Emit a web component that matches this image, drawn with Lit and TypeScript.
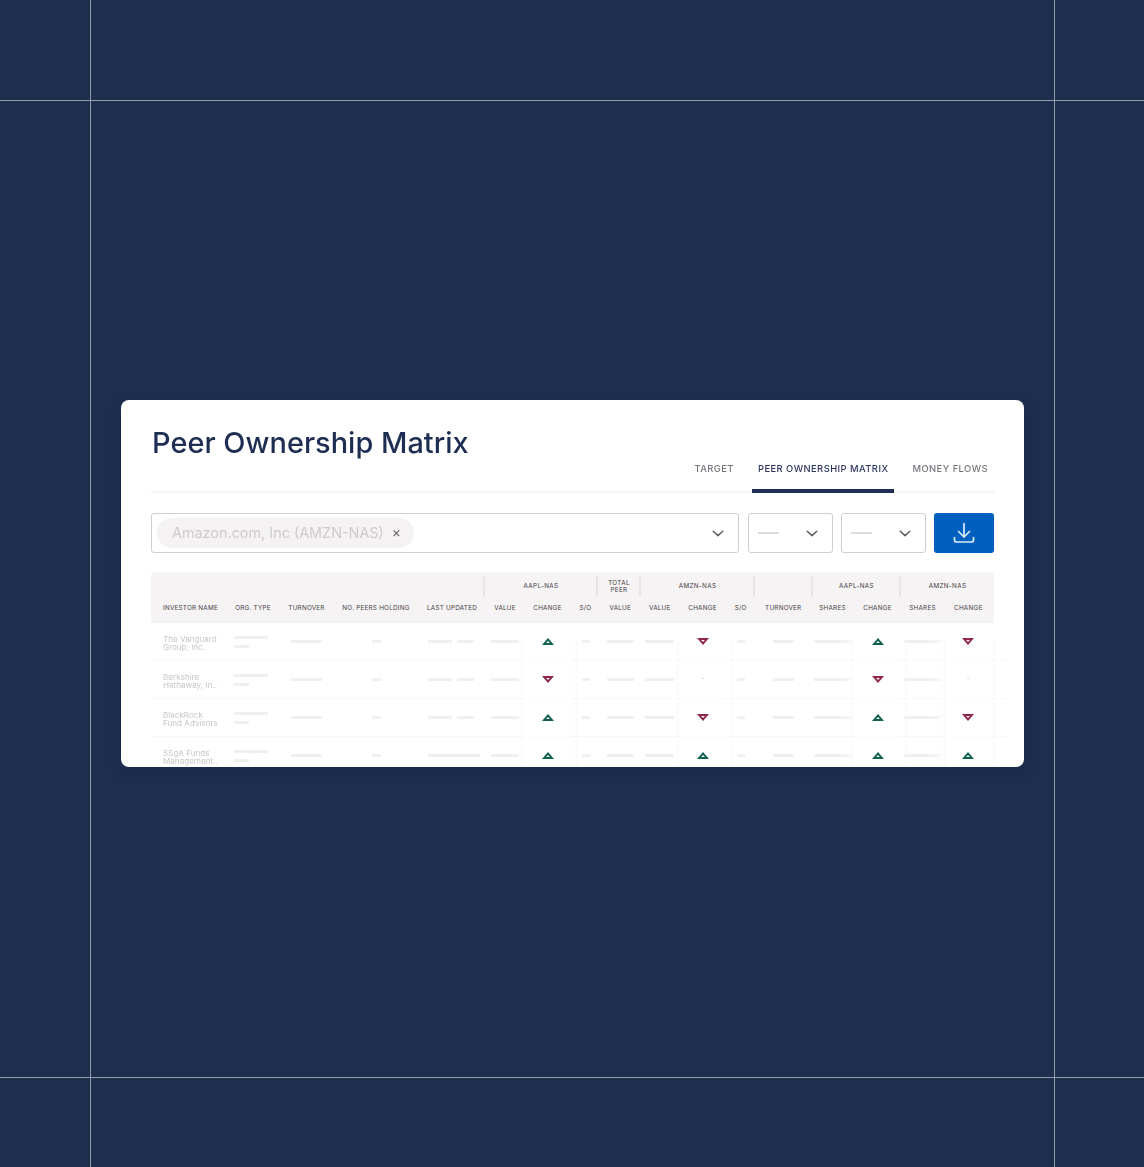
import { LitElement, html, css, svg } from "lit";
import { customElement } from "lit/decorators.js";

type Chg = "u" | "d" | "-";
const rows: { n: [string, string]; c: [Chg, Chg, Chg, Chg]; long?: boolean }[] = [
  { n: ["The Vanguard", "Group, Inc."], c: ["u", "d", "u", "d"] },
  { n: ["Berkshire", "Hathaway, In.."], c: ["d", "-", "d", "-"] },
  { n: ["BlackRock", "Fund Advisors"], c: ["u", "d", "u", "d"] },
  { n: ["SSgA Funds", "Management.."], c: ["u", "u", "u", "u"], long: true },
];
const heads = ["INVESTOR NAME", "ORG. TYPE", "TURNOVER", "NO. PEERS HOLDING", "LAST UPDATED", "VALUE", "CHANGE", "S/O", "VALUE", "VALUE", "CHANGE", "S/O", "TURNOVER", "SHARES", "CHANGE", "SHARES", "CHANGE"];
const groups = [
  ["", false], ["AAPL-NAS", true], ["TOTAL PEER", true], ["AMZN-NAS", true], ["", true], ["AAPL-NAS", true], ["AMZN-NAS", true],
] as [string, boolean][];
const streaks = [369, 424, 525, 579, 700, 754, 792, 842];

const chevron = svg`<svg class="chev" width="12" height="7" viewBox="0 0 12 7" fill="none"><path d="M1.2 1.2 6 5.6l4.8-4.4" stroke="#5f5d63" stroke-width="1.5" stroke-linecap="round" stroke-linejoin="round"/></svg>`;
const up = svg`<svg width="12" height="7" viewBox="0 0 12 7"><path d="M6 0 12 7H0Z" fill="#0f6150"/><path d="M6 3 7.9 5.1H4.1Z" fill="#fff"/></svg>`;
const down = svg`<svg width="12" height="7" viewBox="0 0 12 7"><path d="M6 7 12 0H0Z" fill="#8e2747"/><path d="M6 4 7.9 1.9H4.1Z" fill="#fff"/></svg>`;

@customElement("app-root")
export class AppRoot extends LitElement {
  static styles = css`
    :host { display: block; position: relative; width: 1144px; height: 1167px; background: #1e2e4e; overflow: hidden; font-family: Inter, "Liberation Sans", sans-serif; }
    .v, .h { position: absolute; background: #8e9ca8; }
    .v { top: 0; bottom: 0; width: 1px; }
    .h { left: 0; right: 0; height: 1px; }
    .x1 { left: 90px; } .x2 { left: 1054px; } .y1 { top: 100px; } .y2 { top: 1077px; }
    .stage { padding: 400px 120px 0 121px; }
    .card { height: 367px; box-sizing: border-box; background: #fff; border-radius: 8px; padding: 0 30px; overflow: hidden; box-shadow: 0 4px 12px rgba(10, 20, 40, .15); }
    .top, .filters, .table { filter: blur(.4px); }
    .top { height: 93px; box-sizing: border-box; position: relative; display: flex; justify-content: space-between; border-bottom: 2px solid #f6f4f4; }
    h1 { margin: 23px 0 0 1px; font-size: 28.9px; line-height: 40px; font-weight: 500; color: #1e2d52; letter-spacing: .03px; }
    .tabs { display: flex; align-items: flex-end; height: 93px; }
    .tab { font-size: 9.4px; letter-spacing: .45px; color: #77757b; font-weight: 500; height: 32px; padding: 0 6px; display: flex; align-items: flex-start; white-space: nowrap; box-sizing: border-box; margin-bottom: -1px; line-height: 14px; }
    .tab.on { color: #2b3560; border-bottom: 4px solid #1e2d52; margin: 0 12px; padding-top: 1px; }
    .filters { display: flex; gap: 9px; margin-top: 20px; }
    .box { height: 40px; box-sizing: border-box; border: 1px solid #cfcfcf; border-radius: 3px; display: flex; align-items: center; background: #fff; }
    .search { width: 588px; padding: 0 14px 0 5px; justify-content: space-between; }
    .chip { height: 30px; width: 257px; box-sizing: border-box; border-radius: 15px; background: #f5f2f3; display: flex; align-items: center; padding: 0 13px 0 15px; justify-content: space-between; color: #cdcbcc; font-size: 14.4px; white-space: nowrap; }
    .chip span { margin-top: -2px; }
    .chip b { color: #66646a; font-weight: 400; font-size: 14px; margin-top: -3px; }
    .sel { width: 85px; padding: 0 14px 0 9px; justify-content: space-between; }
    .sel + .sel { margin-left: -1px; }
    .dash { width: 21px; height: 2px; background: #dcdcdc; }
    .btn { width: 60px; height: 40px; margin-left: -1px; background: #0060bf; border-radius: 3px; display: flex; align-items: center; justify-content: center; }
    .table { margin-top: 19px; }
    .thead { background: #f6f3f4; height: 51px; border-radius: 4px 4px 0 0; }
    .groups { display: grid; grid-template-columns: 333px 113px 43px 114px 58px 88px 94px; height: 26px; padding-top: 4px; box-sizing: border-box; }
    .g { display: flex; align-items: center; justify-content: center; text-align: center; font-size: 6.3px; line-height: 6.5px; letter-spacing: .35px; font-weight: 400; color: #3e3c42; height: 21px; }
    .g.div { border-left: 2px solid #e7e4e5; margin-left: -1px; }
    .g span { display: block; }
    .g span.narrow { width: 30px; }
    .heads, .row { display: grid; grid-template-columns: 75.5px 53px 54px 85px 67px 39px 46px 30px 39.5px 39.5px 46px 30.5px 54.5px 44px 46px 44px 49.5px; }
    .heads { height: 25px; align-items: center; }
    .hd { font-size: 6.3px; letter-spacing: .25px; font-weight: 400; color: #3e3c42; text-align: center; white-space: nowrap; display: flex; justify-content: center; padding-bottom: 5px; }
    .hd:first-child { justify-content: flex-start; padding-left: 12px; }
    .hd:last-child { padding-right: 2px; }
    .rows { position: relative; }
    .row { height: 38px; grid-template-columns: 75.5px 53px 54px 85px 67px 39px 46px 30px 39.5px 39.5px 46px 30.5px 54.5px 44px 46px 44px 49.5px 12px; margin-right: -12px; }
    .cell { display: flex; align-items: center; justify-content: center; border-bottom: 1.5px solid #f9f7f8; box-sizing: border-box; position: relative; }
    .cell.plain { border-bottom-color: #fcfbfc; }
    .cell.last { padding-right: 2px; }
    .cell.name { justify-content: flex-start; padding: 3px 0 0 12px; font-size: 8.1px; line-height: 8px; color: #c9c7c9; white-space: nowrap; }
    .bar { height: 3px; background: #f1efef; display: block; }
    .bar.fade { background: linear-gradient(90deg, #f1efef 70%, #f8f7f7); }
    .org { flex-direction: column; align-items: flex-start; justify-content: flex-start; padding: 13px 0 0 7.5px; gap: 6px; }
    .upd { justify-content: flex-start; padding-left: 9.5px; gap: 5px; }
    .tiny { color: #bdbbbd; font-size: 7px; line-height: 7px; margin-top: -2px; }
    .streak { position: absolute; top: 17px; bottom: -10px; width: 3px; background: rgba(250, 247, 250, .45); }
    .arrow { display: flex; margin-top: -1px; }
    .name-text { display: block; }
  `;

  private bar(w: number, fade = false) {
    return html`<span class="bar ${fade ? "fade" : ""}" style="width:${w}px"></span>`;
  }

  private change(c: Chg) {
    if (c === "-") return html`<span class="tiny">-</span>`;
    return html`<span class="arrow">${c === "u" ? up : down}</span>`;
  }

  render() {
    return html`
      <div class="v x1"></div><div class="v x2"></div><div class="h y1"></div><div class="h y2"></div>
      <div class="stage">
        <div class="card">
          <div class="top">
            <h1>Peer Ownership Matrix</h1>
            <div class="tabs">
              <div class="tab">TARGET</div>
              <div class="tab on">PEER OWNERSHIP MATRIX</div>
              <div class="tab">MONEY FLOWS</div>
            </div>
          </div>
          <div class="filters">
            <div class="box search">
              <div class="chip"><span>Amazon.com, Inc (AMZN-NAS)</span><b>×</b></div>
              ${chevron}
            </div>
            <div class="box sel"><span class="dash"></span>${chevron}</div>
            <div class="box sel"><span class="dash"></span>${chevron}</div>
            <div class="btn">
              <svg width="22" height="22" viewBox="0 0 22 22" fill="none" stroke="#dcebf8" stroke-width="1.7" stroke-linecap="round" stroke-linejoin="round"><path d="M11 1.5v13"/><path d="M5.5 9.5 11 15l5.5-5.5"/><path d="M1.5 15.5v2.5a2 2 0 0 0 2 2h15a2 2 0 0 0 2-2v-2.5"/></svg>
            </div>
          </div>
          <div class="table">
            <div class="thead">
              <div class="groups">
                ${groups.map(([t, d]) => html`<div class="g ${d ? "div" : ""}"><span class="${t === "TOTAL PEER" ? "narrow" : ""}">${t}</span></div>`)}
              </div>
              <div class="heads">${heads.map((h) => html`<div class="hd">${h}</div>`)}</div>
            </div>
            <div class="rows">
              ${rows.map((r) => html`
                <div class="row">
                  <div class="cell name"><div><span class="name-text">${r.n[0]}</span><span class="name-text">${r.n[1]}</span></div></div>
                  <div class="cell org">${this.bar(34)}${this.bar(15)}</div>
                  <div class="cell">${this.bar(31)}</div>
                  <div class="cell">${this.bar(9)}</div>
                  <div class="cell upd">${r.long ? this.bar(52) : html`${this.bar(24)}${this.bar(17)}`}</div>
                  <div class="cell">${this.bar(28)}</div>
                  <div class="cell plain">${this.change(r.c[0])}</div>
                  <div class="cell">${this.bar(8)}</div>
                  <div class="cell">${this.bar(27)}</div>
                  <div class="cell">${this.bar(29)}</div>
                  <div class="cell plain">${this.change(r.c[1])}</div>
                  <div class="cell">${this.bar(8)}</div>
                  <div class="cell">${this.bar(21)}</div>
                  <div class="cell">${this.bar(37, true)}</div>
                  <div class="cell plain">${this.change(r.c[2])}</div>
                  <div class="cell">${this.bar(37, true)}</div>
                  <div class="cell plain last">${this.change(r.c[3])}</div>
                  <div class="cell"></div>
                </div>`)}
              ${streaks.map((x) => html`<div class="streak" style="left:${x}px"></div>`)}
            </div>
          </div>
        </div>
      </div>
    `;
  }
}
